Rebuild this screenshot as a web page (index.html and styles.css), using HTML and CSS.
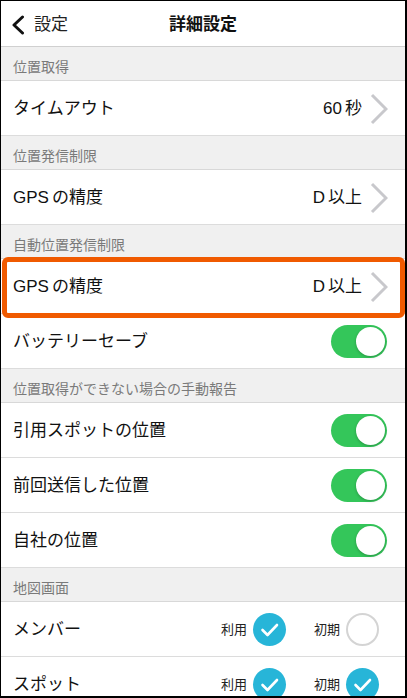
FILE: index.html
```html
<!DOCTYPE html>
<html lang="ja">
<head>
<meta charset="utf-8">
<title>詳細設定</title>
<link rel="stylesheet" href="styles.css">
</head>
<body>
<div class="screen">
  <header class="nav">
    <div class="back">
      <svg class="back-icon" width="14" height="20" viewBox="0 0 14 20"><polyline points="11.5,2 3,10 11.5,18" fill="none" stroke="#111" stroke-width="3" stroke-linecap="round" stroke-linejoin="round"/></svg>
      <span>設定</span>
    </div>
    <h1 class="title">詳細設定</h1>
  </header>

  <div class="section">位置取得</div>
  <div class="row">
    <span class="label">タイムアウト</span>
    <span class="value"><span class="latin">60</span>秒</span>
    <svg class="chev" width="18" height="32" viewBox="0 0 18 32"><polyline points="2,2 16,16 2,30" fill="none" stroke="#c8c8cc" stroke-width="3"/></svg>
  </div>

  <div class="section">位置発信制限</div>
  <div class="row">
    <span class="label"><span class="latin">GPS</span>の精度</span>
    <span class="value"><span class="latin">D</span>以上</span>
    <svg class="chev" width="18" height="32" viewBox="0 0 18 32"><polyline points="2,2 16,16 2,30" fill="none" stroke="#c8c8cc" stroke-width="3"/></svg>
  </div>

  <div class="section">自動位置発信制限</div>
  <div class="row highlight">
    <span class="label"><span class="latin">GPS</span>の精度</span>
    <span class="value"><span class="latin">D</span>以上</span>
    <svg class="chev" width="18" height="32" viewBox="0 0 18 32"><polyline points="2,2 16,16 2,30" fill="none" stroke="#c8c8cc" stroke-width="3"/></svg>
  </div>
  <div class="row">
    <span class="label">バッテリーセーブ</span>
    <span class="toggle"><span class="knob"></span></span>
  </div>

  <div class="section">位置取得ができない場合の手動報告</div>
  <div class="row">
    <span class="label">引用スポットの位置</span>
    <span class="toggle"><span class="knob"></span></span>
  </div>
  <div class="row">
    <span class="label">前回送信した位置</span>
    <span class="toggle"><span class="knob"></span></span>
  </div>
  <div class="row">
    <span class="label">自社の位置</span>
    <span class="toggle"><span class="knob"></span></span>
  </div>

  <div class="section">地図画面</div>
  <div class="row checks">
    <span class="label">メンバー</span>
    <span class="opt">利用</span>
    <span class="check on"><svg width="33" height="33" viewBox="0 0 33 33"><polyline points="9.5,17 14.5,22 24,12" fill="none" stroke="#fff" stroke-width="2.6" stroke-linecap="round" stroke-linejoin="round"/></svg></span>
    <span class="opt opt2">初期</span>
    <span class="check off"></span>
  </div>
  <div class="row checks">
    <span class="label">スポット</span>
    <span class="opt">利用</span>
    <span class="check on"><svg width="33" height="33" viewBox="0 0 33 33"><polyline points="9.5,17 14.5,22 24,12" fill="none" stroke="#fff" stroke-width="2.6" stroke-linecap="round" stroke-linejoin="round"/></svg></span>
    <span class="opt opt2">初期</span>
    <span class="check on"><svg width="33" height="33" viewBox="0 0 33 33"><polyline points="9.5,17 14.5,22 24,12" fill="none" stroke="#fff" stroke-width="2.6" stroke-linecap="round" stroke-linejoin="round"/></svg></span>
  </div>
</div>
</body>
</html>
```

FILE: styles.css
```css
* { box-sizing: border-box; }

html, body {
  margin: 0;
  padding: 0;
  background: #fff;
}

body {
  font-family: "Liberation Sans", "Noto Sans CJK JP", sans-serif;
  color: #111;
}

.screen {
  width: 407px;
  height: 698px;
  overflow: hidden;
  border-style: solid;
  border-color: #000;
  border-width: 1px 2px 2px 1px;
  background: #fff;
  display: flex;
  flex-direction: column;
}

.nav {
  flex: none;
  height: 46px;
  border-bottom: 1px solid #d0d0d0;
  display: grid;
  grid-template-columns: 1fr auto 1fr;
  align-items: center;
  padding-top: 2px;
}

.back {
  display: flex;
  align-items: center;
  gap: 9px;
  padding-left: 10px;
  font-size: 17px;
  line-height: 20px;
  color: #222;
}

.back-icon { display: block; }

.title {
  margin: 0;
  font-size: 17px;
  font-weight: bold;
  line-height: 20px;
  color: #111;
}

.section {
  flex: none;
  height: 34px;
  padding: 10px 0 0 12px;
  background: #f0f0f0;
  border-bottom: 1px solid #d8d8d8;
  font-size: 14px;
  line-height: 20px;
  color: #7a7a7a;
}

.row {
  flex: none;
  height: 55px;
  display: flex;
  align-items: center;
  padding: 1px 17px 0 12px;
  border-bottom: 1px solid #dcdcdc;
  background: #fff;
  font-size: 17px;
  line-height: 22px;
}

.label {
  flex: 1;
  color: #111;
}

.latin {
  margin-right: 3px;
}

.value {
  color: #111;
  margin-right: 8px;
}

.chev { display: block; }

.highlight {
  position: relative;
}

.highlight::after {
  content: "";
  position: absolute;
  left: 1px;
  right: 0;
  top: -2px;
  bottom: -5px;
  border: 5px solid #f05a00;
  border-radius: 6px;
  pointer-events: none;
}

.toggle {
  width: 56px;
  height: 33px;
  border-radius: 17px;
  background: #34c65a;
  display: flex;
  align-items: center;
  justify-content: flex-end;
  padding-right: 2px;
  margin-right: 1px;
}

.knob {
  width: 29px;
  height: 29px;
  border-radius: 50%;
  background: #fff;
  box-shadow: 0 1px 3px rgba(0, 0, 0, 0.25);
}

.checks {
  padding-right: 26px;
}

.opt {
  font-size: 13px;
  line-height: 18px;
  color: #222;
  margin-right: 6px;
}

.opt2 {
  margin-left: 28px;
}

.check {
  width: 33px;
  height: 33px;
  border-radius: 50%;
  display: block;
}

.check svg { display: block; }

.check.on {
  background: #27b5d8;
}

.check.off {
  border: 2px solid #d4d4d4;
  background: #fff;
}
```
